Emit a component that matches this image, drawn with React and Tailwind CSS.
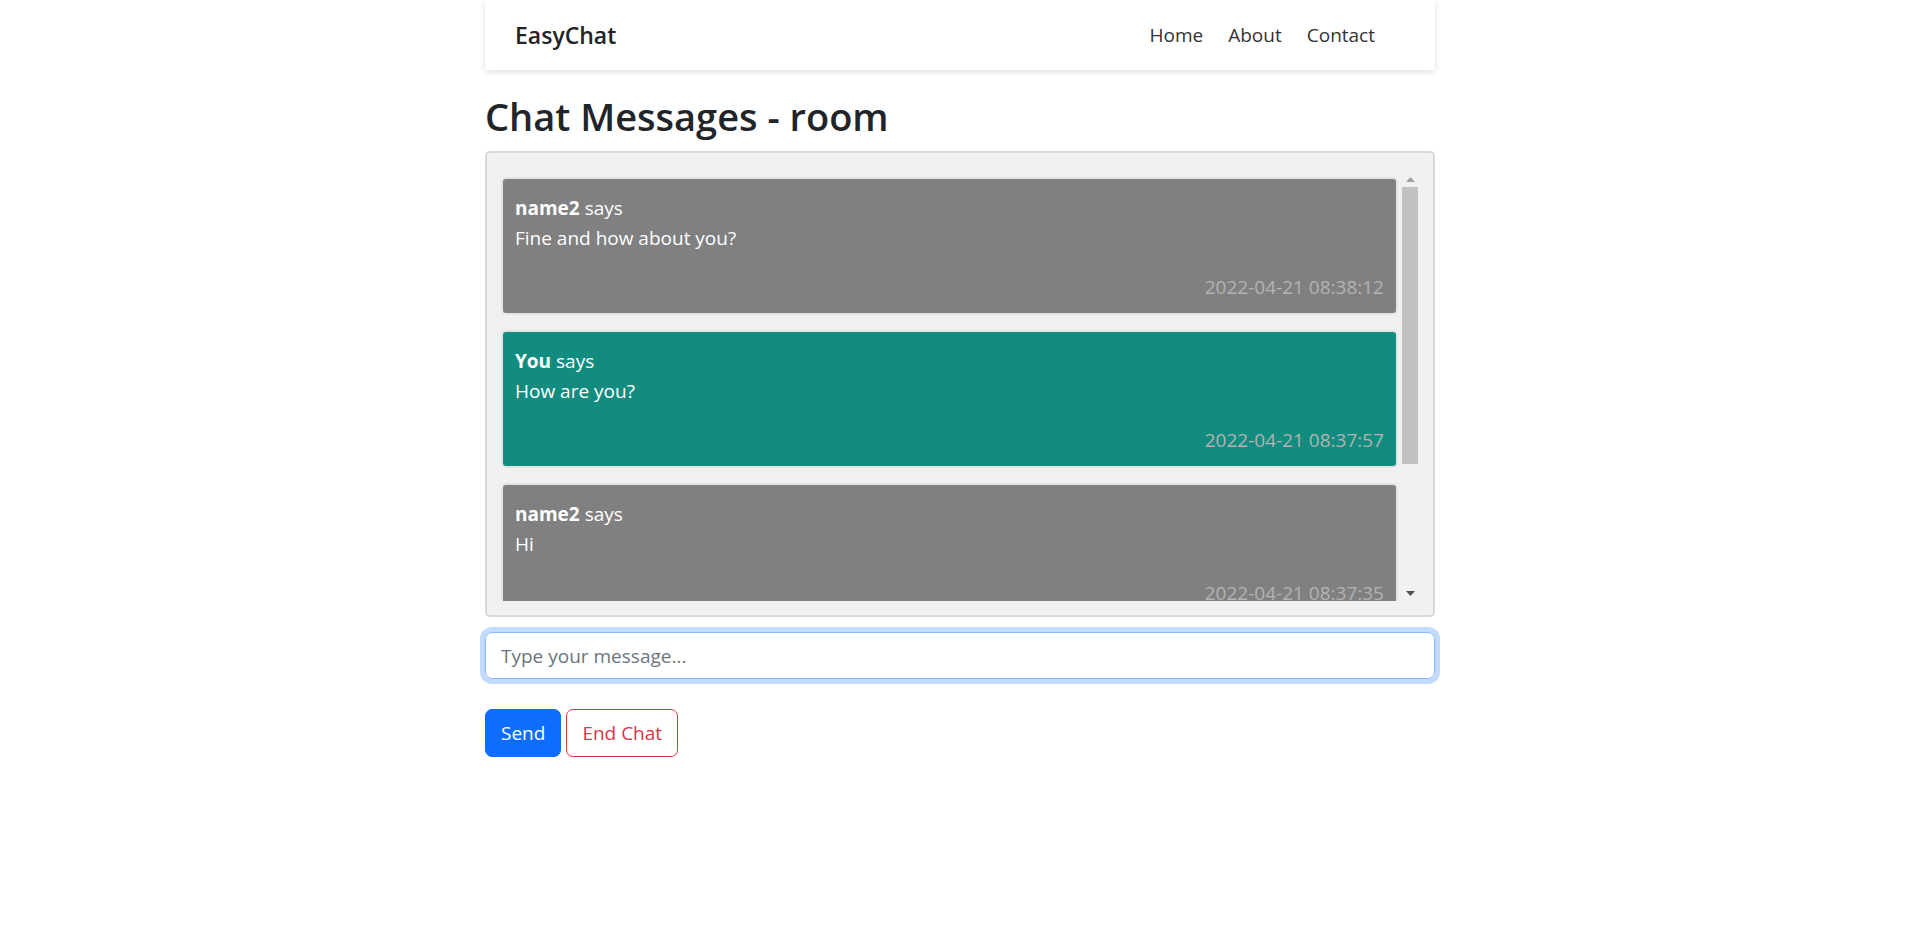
import React from 'react';

const messages = [
  { from: 'name2', text: 'Fine and how about you?', time: '2022-04-21 08:38:12', mine: false },
  { from: 'You', text: 'How are you?', time: '2022-04-21 08:37:57', mine: true },
  { from: 'name2', text: 'Hi', time: '2022-04-21 08:37:35', mine: false },
  { from: 'You', text: 'Hello', time: '2022-04-21 08:37:20', mine: true },
];

const Message = ({ msg }) => (
  <div
    className={`h-[138px] shrink-0 mb-[15px] rounded-[5px] border-2 border-[#e4e4e4] pl-[12px] pr-[12px] pt-[14px] text-white ${
      msg.mine ? 'bg-[#128c7e]' : 'bg-[#808080]'
    }`}
  >
    <div className="leading-[30px]">
      <span className="font-bold">{msg.from}</span> says
    </div>
    <div className="leading-[30px]">{msg.text}</div>
    <div className="mt-[19px] text-right leading-[30px] text-[#b3b3b3]">{msg.time}</div>
  </div>
);

// fake classic scrollbar, scrolled to top
const ScrollBar = () => (
  <div className="w-[18px] shrink-0 flex flex-col bg-[#f1f1f1]">
    <div className="h-[15px] flex items-center justify-center">
      <svg width="9" height="5" viewBox="0 0 9 5"><path d="M4.5 0L9 5H0z" fill="#a3a3a3" /></svg>
    </div>
    <div className="h-[277px] mx-[1px] bg-[#c1c1c1]" />
    <div className="flex-1" />
    <div className="h-[15px] flex items-center justify-center">
      <svg width="9" height="5" viewBox="0 0 9 5"><path d="M0 0H9L4.5 5z" fill="#505050" /></svg>
    </div>
  </div>
);

export default function App() {
  return (
    <div className="min-h-screen bg-white text-[19px] text-[#212529] font-['Open_Sans','Noto_Sans',sans-serif]">
      <div className="w-[950px] mx-auto">
        {/* navbar */}
        <nav className="h-[70px] flex items-center justify-between pl-[30px] pr-[60px] bg-white shadow-[0_2px_6px_rgba(0,0,0,0.12)]">
          <a className="text-[23px] font-semibold text-[#212529]">EasyChat</a>
          <ul className="flex gap-[25px] text-[#333]">
            <li>Home</li>
            <li>About</li>
            <li>Contact</li>
          </ul>
        </nav>

        <h2 className="mt-[22px] mb-[11px] text-[38px] font-semibold leading-[48px]">Chat Messages - room</h2>

        {/* messages box */}
        <div className="h-[466px] rounded-[5px] border-2 border-[#d9d9d9] bg-[#f0f0f0] pl-[14px] pr-[14px] pt-[19px] pb-[14px]">
          <div className="h-[429px] flex gap-[3px]">
            <div className="flex-1 overflow-hidden pt-[5px] flex flex-col">
              {messages.map((m, i) => (
                <Message key={i} msg={m} />
              ))}
            </div>
            <ScrollBar />
          </div>
        </div>

        <input
          className="mt-[15px] w-full h-[47px] rounded-[7px] border border-[#86b7fe] px-[15px] outline-none shadow-[0_0_0_5px_rgba(13,110,253,0.25)] placeholder:text-[#6c757d]"
          placeholder="Type your message..."
        />

        <div className="mt-[30px] flex gap-[5px]">
          <button className="h-[48px] px-[15px] rounded-[7px] bg-[#0d6efd] text-white border border-[#0d6efd]">Send</button>
          <button className="h-[48px] px-[15px] rounded-[7px] text-[#dc3545] border border-[#dc3545] bg-white">End Chat</button>
        </div>
      </div>
    </div>
  );
}
